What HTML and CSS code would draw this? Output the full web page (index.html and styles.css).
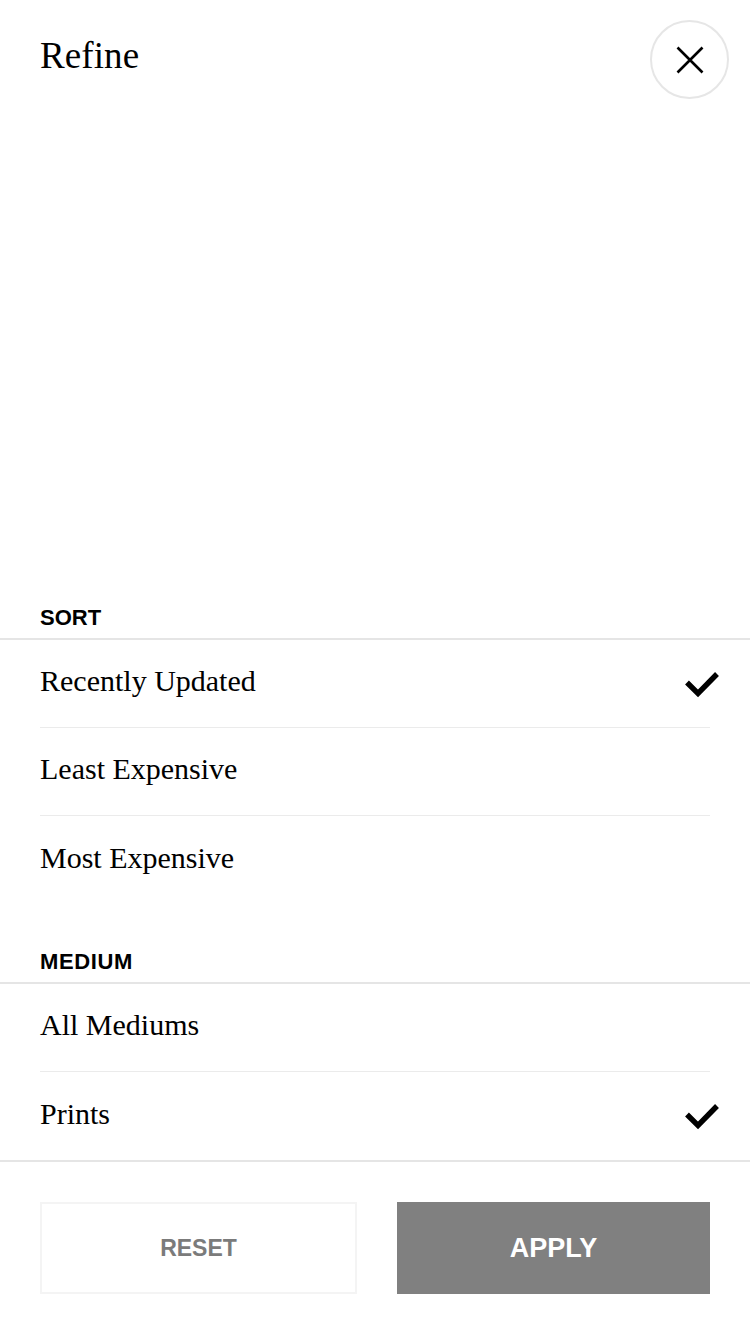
FILE: index.html
```html
<!DOCTYPE html>
<html lang="en">
<head>
<meta charset="utf-8">
<title>Refine</title>
<link rel="stylesheet" href="styles.css">
</head>
<body>
<div class="sheet">
  <header class="top">
    <h1 class="title">Refine</h1>
    <button class="close" aria-label="Close">
      <svg width="28" height="28" viewBox="0 0 28 28"><path d="M1.5 1.5 L26.5 26.5 M26.5 1.5 L1.5 26.5" stroke="#000" stroke-width="2.6" fill="none"/></svg>
    </button>
  </header>
  <div class="spacer"></div>
  <section class="group">
    <h2 class="group-label">SORT</h2>
    <ul class="options">
      <li class="option">Recently Updated
        <svg class="check" width="36" height="28" viewBox="0 0 36 28"><polyline points="3,12.5 14,23.5 33,4" fill="none" stroke="#000" stroke-width="5.4"/></svg>
      </li>
      <li class="option">Least Expensive</li>
      <li class="option">Most Expensive</li>
    </ul>
  </section>
  <section class="group group-medium">
    <h2 class="group-label">MEDIUM</h2>
    <ul class="options">
      <li class="option">All Mediums</li>
      <li class="option">Prints
        <svg class="check" width="36" height="28" viewBox="0 0 36 28"><polyline points="3,12.5 14,23.5 33,4" fill="none" stroke="#000" stroke-width="5.4"/></svg>
      </li>
    </ul>
  </section>
  <footer class="actions">
    <button class="btn btn-reset">RESET</button>
    <button class="btn btn-apply">APPLY</button>
  </footer>
</div>
</body>
</html>
```
FILE: styles.css
```css
* { box-sizing: border-box; }
html, body { margin: 0; padding: 0; background: #fff; }
body { width: 750px; height: 1334px; overflow: hidden; }

.sheet {
  height: 1334px;
  display: flex;
  flex-direction: column;
  font-family: "Liberation Serif", "Times New Roman", serif;
  color: #000;
}

.top {
  display: flex;
  justify-content: space-between;
  align-items: flex-start;
  padding: 20px 21px 0 40px;
}
.title {
  margin: 16px 0 0;
  font-family: "Liberation Serif", serif;
  font-weight: 400;
  font-size: 37px;
  line-height: 40px;
  letter-spacing: 0.1px;
}
.close {
  width: 79px;
  height: 79px;
  border: 2px solid #e6e6e6;
  border-radius: 50%;
  background: #fff;
  padding: 0;
  display: flex;
  align-items: center;
  justify-content: center;
}
.close svg { display: block; }

.spacer { flex: 1; }

.group-label {
  margin: 0;
  padding: 0 40px 8px;
  font-family: "Liberation Sans", Arial, sans-serif;
  font-weight: 700;
  font-size: 22px;
  line-height: 24px;
  border-bottom: 2px solid #e5e5e5;
}
.group-medium .group-label { margin-top: 46px; letter-spacing: 0.6px; }

.options {
  list-style: none;
  margin: 0;
  padding: 0;
}
.option {
  margin: 0 40px;
  height: 88px;
  display: flex;
  align-items: center;
  justify-content: space-between;
  font-size: 30px;
  line-height: 34px;
  border-bottom: 1px solid #ebebeb;
  padding-bottom: 5px;
}
.option:last-child { border-bottom: none; }
.check { display: block; margin-right: -10px; margin-top: 5px; }

.actions {
  border-top: 2px solid #e5e5e5;
  padding: 40px;
  display: flex;
  gap: 40px;
}
.btn {
  flex: 1 1 0;
  height: 92px;
  font-family: "Liberation Sans", Arial, sans-serif;
  font-weight: 700;
  display: flex;
  align-items: center;
  justify-content: center;
  padding: 0;
}
.btn-reset {
  background: #fff;
  border: 2px solid #f4f4f4;
  color: #7b7b7b;
  font-size: 23px;
}
.btn-apply {
  background: #808080;
  border: none;
  color: #fff;
  font-size: 27px;
}
```
